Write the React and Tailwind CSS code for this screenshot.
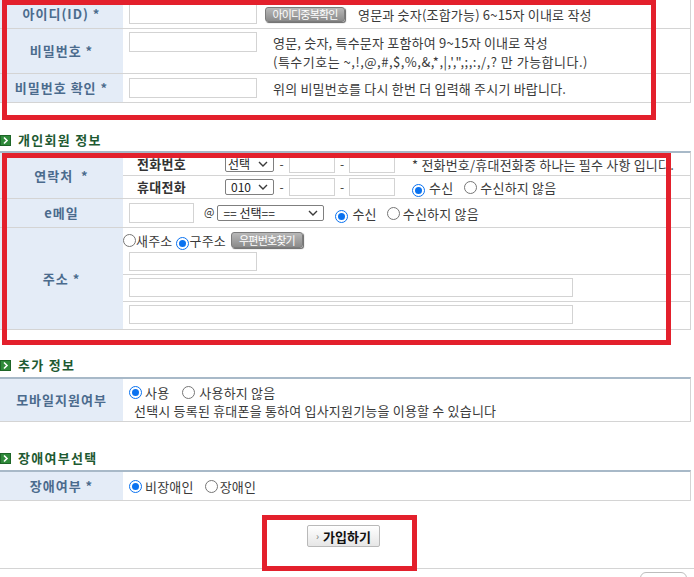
import React from "react";

const Radio = ({ checked }) =>
  checked ? (
    <span className="inline-flex w-[13px] h-[13px] shrink-0 rounded-full border-[1.5px] border-[#0a72f0] bg-white items-center justify-center">
      <span className="w-[7px] h-[7px] rounded-full bg-[#0a72f0]" />
    </span>
  ) : (
    <span className="inline-block w-[13px] h-[13px] shrink-0 rounded-full border border-[#767676] bg-white" />
  );

const Input = ({ className }) => (
  <input
    type="text"
    readOnly
    className={"block shrink-0 border border-[#d3d3d3] bg-white outline-none " + className}
  />
);

const Chevron = () => (
  <svg width="10" height="6" viewBox="0 0 10 6" className="shrink-0">
    <path d="M1 1 L5 5 L9 1" fill="none" stroke="#3a3a3a" strokeWidth="1.4" />
  </svg>
);

const Sel = ({ className, children }) => (
  <div
    className={
      "flex items-center justify-between shrink-0 h-[16px] border border-[#7f7f7f] rounded-[2px] bg-white pr-[5px] text-[12px] leading-none text-[#222] " +
      className
    }
  >
    <span>{children}</span>
    <Chevron />
  </div>
);

const GrayBtn = ({ className, children }) => (
  <div
    className={
      "flex items-center justify-center shrink-0 rounded-[3px] border border-[#7c7c7c] bg-linear-to-b from-[#b8b8b8] to-[#8b8b8b] shadow-[1px_1px_1px_#666] text-white text-[11px] tracking-[-0.8px] leading-none " +
      className
    }
  >
    {children}
  </div>
);

const Label = ({ children }) => (
  <div className="w-[123px] shrink-0 bg-[#e4ecf7] flex items-center justify-center text-[13px] font-bold tracking-[1px] text-[#4b6b8d] whitespace-pre">
    {children}
  </div>
);

const SectionIcon = () => (
  <svg width="11" height="11" viewBox="0 0 11 11" className="shrink-0">
    <rect x="0" y="0" width="11" height="11" fill="#2f8a3a" />
    <rect x="0.5" y="0.5" width="10" height="10" fill="none" stroke="#1d6527" />
    <path d="M4 2.5 L7 5.5 L4 8.5" fill="none" stroke="#ffffff" strokeWidth="1.6" />
  </svg>
);

const Section = ({ className, children }) => (
  <div className={"flex items-end " + className}>
    <div className="flex items-center h-[16px]">
      <SectionIcon />
      <span className="ml-[7px] text-[13px] font-bold tracking-[1.3px] text-[#1e5a32] leading-[16px]">{children}</span>
    </div>
  </div>
);

const Txt = ({ className, children }) => (
  <span className={"text-[13px] tracking-[0.2px] text-[#3a3a3a] whitespace-nowrap leading-none " + (className || "")}>{children}</span>
);

export default function App() {
  return (
    <div className="relative w-[694px] h-[577px] overflow-hidden bg-white font-['Noto_Sans_CJK_KR','Noto_Sans',sans-serif]">
      {/* Table 1 */}
      <div className="w-[691px] border-r border-[#d4d4d4]">
        <div className="flex h-[29px] border-b border-[#d4d4d4]">
          <Label>아이디(ID) *</Label>
          <div className="flex-1 flex items-center">
            <Input className="ml-[6px] w-[128px] h-[20px]" />
            <GrayBtn className="ml-[8px] w-[80px] h-[15px]">아이디중복확인</GrayBtn>
            <Txt className="ml-[13px]">영문과 숫자(조합가능) 6~15자 이내로 작성</Txt>
          </div>
        </div>
        <div className="flex h-[45px] border-b border-[#d4d4d4]">
          <Label>비밀번호 *</Label>
          <div className="flex-1 flex items-start pt-[3px]">
            <Input className="ml-[6px] w-[128px] h-[20px]" />
            <div className="ml-[16px] mt-[1px] flex flex-col text-[13px] tracking-[0.2px] text-[#3a3a3a] leading-[19px] whitespace-nowrap">
              <span>영문, 숫자, 특수문자 포함하여 9~15자 이내로 작성</span>
              <span className="tracking-[0.5px]">(특수기호는 ~,!,@,#,$,%,&amp;,*,|,',",;,:,/,? 만 가능합니다.)</span>
            </div>
          </div>
        </div>
        <div className="flex h-[29px] border-b border-[#d4d4d4]">
          <Label>비밀번호 확인 *</Label>
          <div className="flex-1 flex items-center">
            <Input className="ml-[6px] w-[128px] h-[20px]" />
            <Txt className="ml-[16px]">위의 비밀번호를 다시 한번 더 입력해 주시기 바랍니다.</Txt>
          </div>
        </div>
      </div>

      <Section className="h-[48px] pb-[3px]">개인회원 정보</Section>

      {/* Table 2 */}
      <div className="w-[691px] border-r border-[#d4d4d4] border-t-2 border-t-[#a8b9c8]">
        <div className="flex border-b border-[#d4d4d4]">
          <Label>{"연락처  *"}</Label>
          <div className="flex-1 flex flex-col">
            <div className="h-[23px] border-b border-[#d4d4d4] flex items-center">
              <span className="w-[102px] shrink-0 pl-[14px] text-[13px] font-bold tracking-[0.3px] text-[#333]">전화번호</span>
              <Sel className="w-[49px] pl-[2px]">선택</Sel>
              <span className="w-[15px] text-center text-[12px] text-[#333]">-</span>
              <Input className="w-[46px] h-[18px]" />
              <span className="w-[14px] text-center text-[12px] text-[#333]">-</span>
              <Input className="w-[46px] h-[18px]" />
              <Txt className="ml-[17px]">* 전화번호/휴대전화중 하나는 필수 사항 입니다.</Txt>
            </div>
            <div className="h-[22px] flex items-center">
              <span className="w-[102px] shrink-0 pl-[14px] text-[13px] font-bold tracking-[0.3px] text-[#333]">휴대전화</span>
              <Sel className="w-[49px] pl-[5px]">010</Sel>
              <span className="w-[15px] text-center text-[12px] text-[#333]">-</span>
              <Input className="w-[46px] h-[18px]" />
              <span className="w-[14px] text-center text-[12px] text-[#333]">-</span>
              <Input className="w-[46px] h-[18px]" />
              <span className="ml-[17px]"><Radio checked /></span>
              <Txt className="ml-[4px]">수신</Txt>
              <span className="ml-[11px]"><Radio /></span>
              <Txt className="ml-[3px]">수신하지 않음</Txt>
            </div>
          </div>
        </div>
        <div className="flex h-[29px] border-b border-[#d4d4d4]">
          <Label>e메일</Label>
          <div className="flex-1 flex items-center">
            <Input className="ml-[6px] w-[65px] h-[20px]" />
            <span className="ml-[10px] -mt-[4px] text-[11px] text-[#333] leading-none">@</span>
            <Sel className="ml-[3px] w-[107px] pl-[5px]">== 선택==</Sel>
            <span className="ml-[11px]"><Radio checked /></span>
            <Txt className="ml-[4px]">수신</Txt>
            <span className="ml-[10px]"><Radio /></span>
            <Txt className="ml-[3px]">수신하지 않음</Txt>
          </div>
        </div>
        <div className="flex border-b border-[#d4d4d4]">
          <Label>주소 *</Label>
          <div className="flex-1 flex flex-col">
            <div className="h-[47px] border-b border-[#d4d4d4] flex flex-col pt-[4px]">
              <div className="flex items-center h-[16px]">
                <Radio />
                <Txt>새주소</Txt>
                <span className="ml-[4px]"><Radio checked /></span>
                <Txt>구주소</Txt>
                <GrayBtn className="ml-[5px] w-[72px] h-[16px]">우편번호찾기</GrayBtn>
              </div>
              <Input className="mt-[4px] ml-[6px] w-[128px] h-[19px]" />
            </div>
            <div className="h-[27px] border-b border-[#d4d4d4] pt-[3px]">
              <Input className="ml-[6px] w-[444px] h-[19px]" />
            </div>
            <div className="h-[27px] pt-[3px]">
              <Input className="ml-[6px] w-[444px] h-[19px]" />
            </div>
          </div>
        </div>
      </div>

      <Section className="h-[47px] pb-[4px]">추가 정보</Section>

      {/* Table 3 */}
      <div className="w-[691px] border-r border-[#d4d4d4] border-t-2 border-t-[#a8b9c8]">
        <div className="flex h-[43px] border-b border-[#d4d4d4]">
          <Label>모바일지원여부</Label>
          <div className="flex-1 flex flex-col pt-[4px]">
            <div className="flex items-center h-[18px] pl-[6px]">
              <Radio checked />
              <Txt className="ml-[3px]">사용</Txt>
              <span className="ml-[13px]"><Radio /></span>
              <Txt className="ml-[4px]">사용하지 않음</Txt>
            </div>
            <div className="flex items-center h-[18px] pl-[11px]">
              <Txt>선택시 등록된 휴대폰을 통하여 입사지원기능을 이용할 수 있습니다</Txt>
            </div>
          </div>
        </div>
      </div>

      <Section className="h-[48px] pb-[4px]">장애여부선택</Section>

      {/* Table 4 */}
      <div className="w-[691px] border-r border-[#d4d4d4] border-t-2 border-t-[#a8b9c8]">
        <div className="flex h-[29px] border-b border-[#d4d4d4]">
          <Label>장애여부 *</Label>
          <div className="flex-1 flex items-center pl-[6px]">
            <Radio checked />
            <Txt className="ml-[3px]">비장애인</Txt>
            <span className="ml-[11px]"><Radio /></span>
            <Txt className="ml-[2px]">장애인</Txt>
          </div>
        </div>
      </div>

      {/* Submit */}
      <div className="h-[68px] border-b border-[#d4d4d4] pt-[24px] pl-[307px] flex items-start">
        <div className="flex items-center justify-center w-[73px] h-[22px] border border-[#b9b9b9] rounded-[2px] bg-linear-to-b from-white to-[#e6e6e6]">
          <span className="text-[10px] text-[#777] leading-none mr-[4px]">›</span>
          <span className="text-[13px] font-bold text-[#111] leading-none">가입하기</span>
        </div>
      </div>
      <div className="flex justify-end pr-[7px] pt-[3px]">
        <div className="w-[47px] h-[20px] rounded-[6px] border border-[#bdbdbd]" />
      </div>

      {/* Red annotation boxes */}
      <div className="absolute left-[2px] top-0 w-[654px] h-[120px] border-[5px] border-[#e3202c] pointer-events-none" />
      <div className="absolute left-[2px] top-[153px] w-[669px] h-[192px] border-[5px] border-[#e3202c] pointer-events-none" />
      <div className="absolute left-[262px] top-[515px] w-[155px] h-[56px] border-[5px] border-[#e3202c] pointer-events-none" />
    </div>
  );
}
